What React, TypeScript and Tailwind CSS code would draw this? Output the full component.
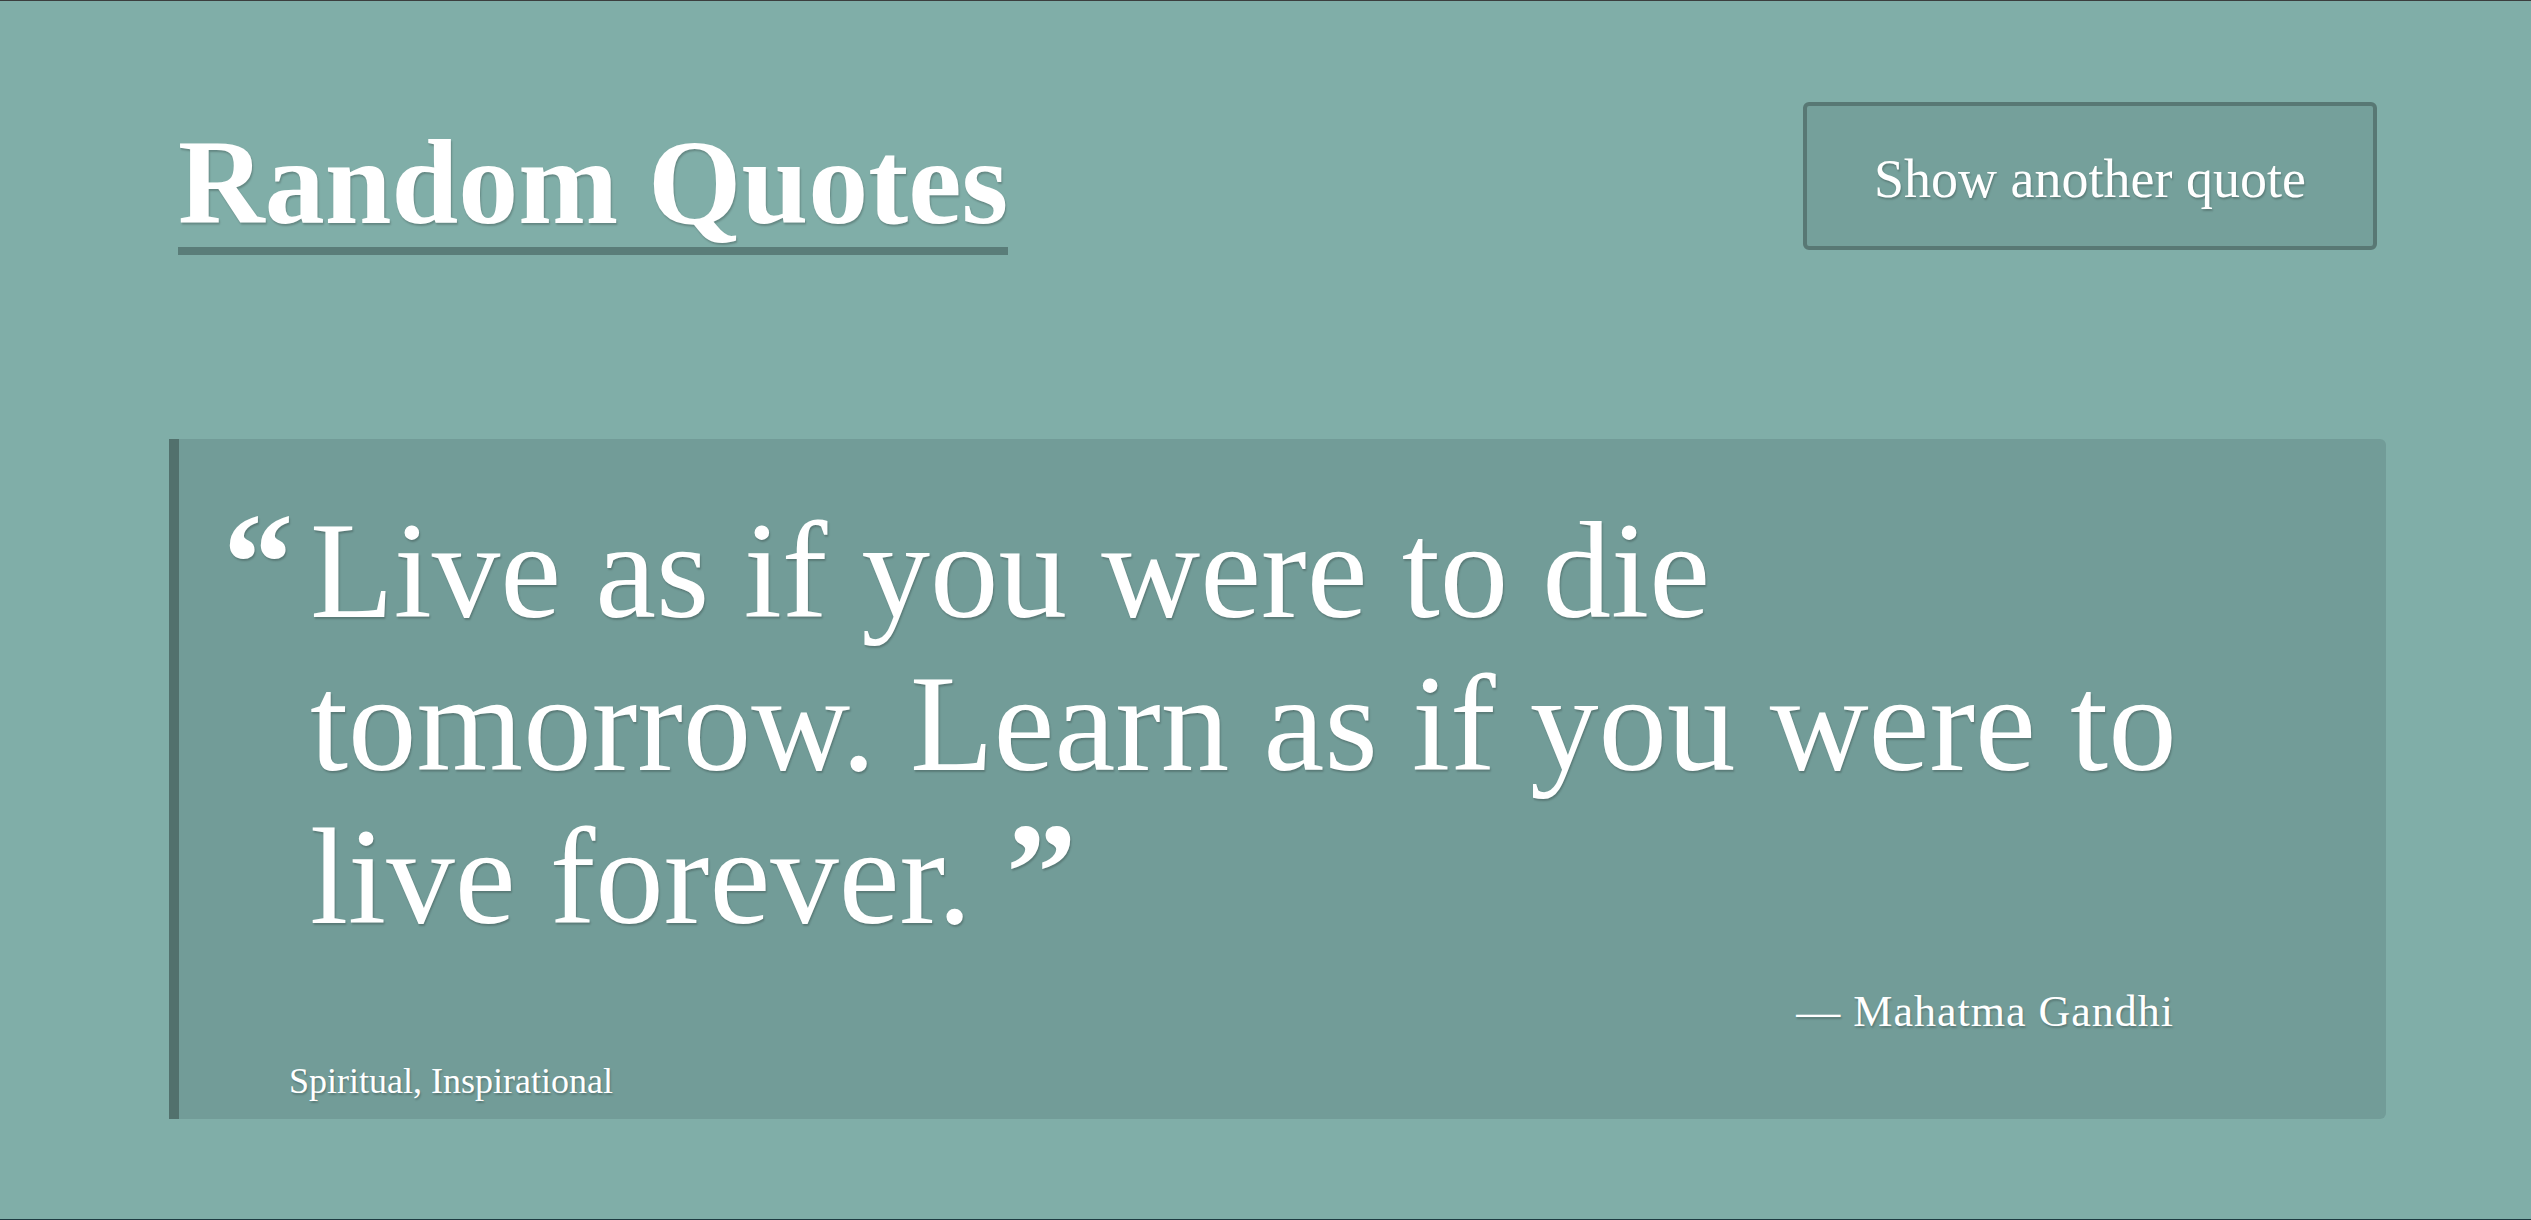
const quote = {
  text: "Live as if you were to die tomorrow. Learn as if you were to live forever.",
  author: "Mahatma Gandhi",
  tags: ["Spiritual", "Inspirational"],
};

const shadow = "[text-shadow:1px_2px_2px_rgba(0,0,0,0.22)]";

export default function App() {
  return (
    <div className="flex h-[1220px] flex-col border-t border-[#3b3e3e] bg-[#80aea8] pl-[169px] pr-[145px] font-['Liberation_Serif',serif] text-white">
      <header className="flex items-start justify-between px-[9px] pt-[101px]">
        <h1
          className={`mt-[21px] inline-block border-b-[8px] border-[#5a7d79] pb-[4px] text-[120px] font-bold leading-none ${shadow}`}
        >
          Random Quotes
        </h1>
        <button className="flex h-[148px] w-[574px] items-center justify-center rounded-md border-4 border-[#587874] bg-[#75a09b] pt-[6px] text-[54px] leading-none text-white">
          <span className={shadow}>Show another quote</span>
        </button>
      </header>

      <section className="mt-[184px] flex h-[680px] flex-col rounded-r-md border-l-[10px] border-[#52716d] bg-[#729c98] pl-[44px] pr-[96px] pt-[56px]">
        <div className="flex">
          <span className={`w-[87px] shrink-0 pt-[8px] text-[141px] font-bold leading-[120px] ${shadow}`}>
            “
          </span>
          <p className={`flex-1 text-[137px] leading-[153px] ${shadow}`}>
            {quote.text}{" "}
            <span className="relative top-[-2px] text-[141px] font-bold leading-[0]">”</span>
          </p>
        </div>
        <div className={`mt-[36px] pr-[116px] text-right text-[44px] leading-none tracking-[1px] ${shadow}`}>
          — {quote.author}
        </div>
        <div className={`ml-[66px] mt-[29px] text-[36px] leading-none ${shadow}`}>
          {quote.tags.join(", ")}
        </div>
      </section>

      <div className="mt-auto -ml-[169px] -mr-[145px] h-px bg-[#1d3b41]" />
    </div>
  );
}
